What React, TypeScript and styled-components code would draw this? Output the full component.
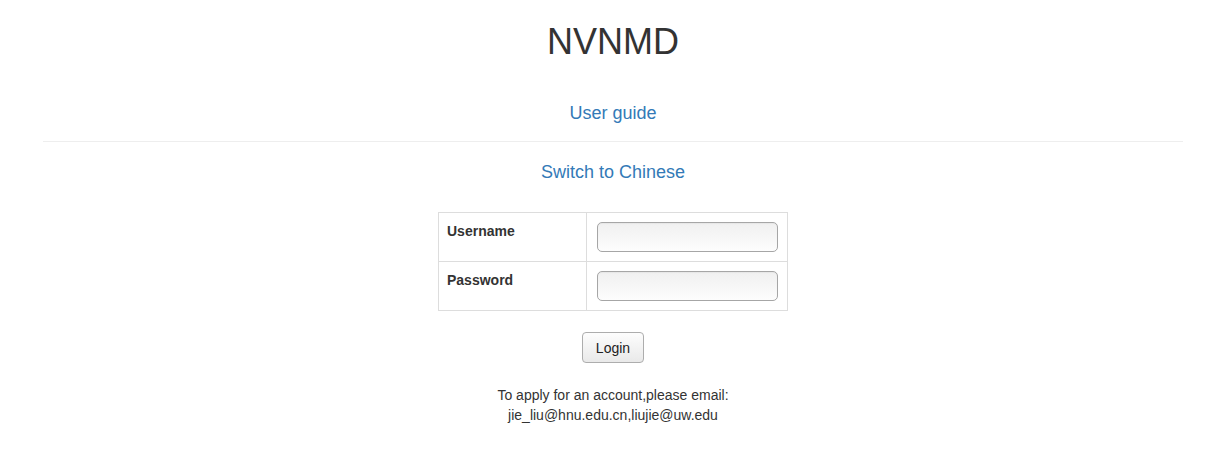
import React, {useState} from 'react';
import styled, {createGlobalStyle} from "styled-components";

const GlobalStyle = createGlobalStyle`
    html, body {
        margin: 0;
        padding: 0;
        background: #fff;
    }
    body {
        font-family: "Liberation Sans", Arial, Helvetica, sans-serif;
        font-size: 14px;
        line-height: 20px;
        color: #333;
    }
`;

const Container = styled.div`
    width: 1140px;
    margin: 0 auto;
    padding: 0 15px;
    text-align: center;
`;

const Title = styled.h1`
    margin: 22px 0 0;
    font-size: 36px;
    font-weight: 500;
    line-height: 39.6px;
    color: #333;
`;

const LinkLine = styled.div<{$top: number}>`
    margin-top: ${p => p.$top}px;
    font-size: 18px;
    line-height: 20px;
`;

const Link = styled.a`
    color: #337ab7;
    text-decoration: none;
`;

const Rule = styled.hr`
    margin: 18px 0 0;
    border: 0;
    border-top: 1px solid #eee;
`;

const LoginTable = styled.table`
    margin: 30px auto 0;
    width: 350px;
    border-collapse: collapse;
    text-align: left;
`;

const Cell = styled.td<{$width: number}>`
    width: ${p => p.$width}px;
    box-sizing: border-box;
    padding: 9px 9px;
    border: 1px solid #ddd;
    vertical-align: top;
`;

const Label = styled.span`
    display: block;
    font-weight: bold;
    line-height: 20px;
    margin: -1px 0 0 -1px;
`;

const Input = styled.input`
    display: block;
    box-sizing: border-box;
    width: 181px;
    height: 30px;
    margin: 0 0 0 1px;
    padding: 2px 6px;
    border: 1px solid #a6a6a6;
    border-radius: 5px;
    background: linear-gradient(to bottom, #f0f0f0, #fdfdfd);
    box-shadow: inset 0 1px 1px rgba(0, 0, 0, 0.04);
    font: inherit;
    outline: none;
`;

const Button = styled.button`
    display: block;
    margin: 21px auto 0;
    box-sizing: border-box;
    height: 31px;
    padding: 2px 13px 0;
    border: 1px solid #adadad;
    border-radius: 4px;
    background: linear-gradient(to bottom, #fdfdfd, #e9e9e9);
    font-family: "Liberation Sans", Arial, sans-serif;
    font-size: 14px;
    color: #222;
    cursor: pointer;
`;

const Note = styled.p`
    margin: 22px 0 0;
    font-size: 14px;
    line-height: 20px;
    color: #333;
`;

const App: React.FC = () => {
    const [username, setUsername] = useState("");
    const [password, setPassword] = useState("");

    return (
        <>
            <GlobalStyle/>
            <Container>
                <Title>NVNMD</Title>
                <LinkLine $top={41}><Link href={"#"}>User guide</Link></LinkLine>
                <Rule/>
                <LinkLine $top={20}><Link href={"#"}>Switch to Chinese</Link></LinkLine>
                <LoginTable>
                    <tbody>
                    <tr>
                        <Cell $width={149}><Label>Username</Label></Cell>
                        <Cell $width={201}>
                            <Input type="text" value={username} onChange={e => setUsername(e.target.value)}/>
                        </Cell>
                    </tr>
                    <tr>
                        <Cell $width={149}><Label>Password</Label></Cell>
                        <Cell $width={201}>
                            <Input type="password" value={password} onChange={e => setPassword(e.target.value)}/>
                        </Cell>
                    </tr>
                    </tbody>
                </LoginTable>
                <Button type="button">Login</Button>
                <Note>
                    To apply for an account,please email:<br/>
                    jie_liu@hnu.edu.cn,liujie@uw.edu
                </Note>
            </Container>
        </>
    );
};

export default App;
